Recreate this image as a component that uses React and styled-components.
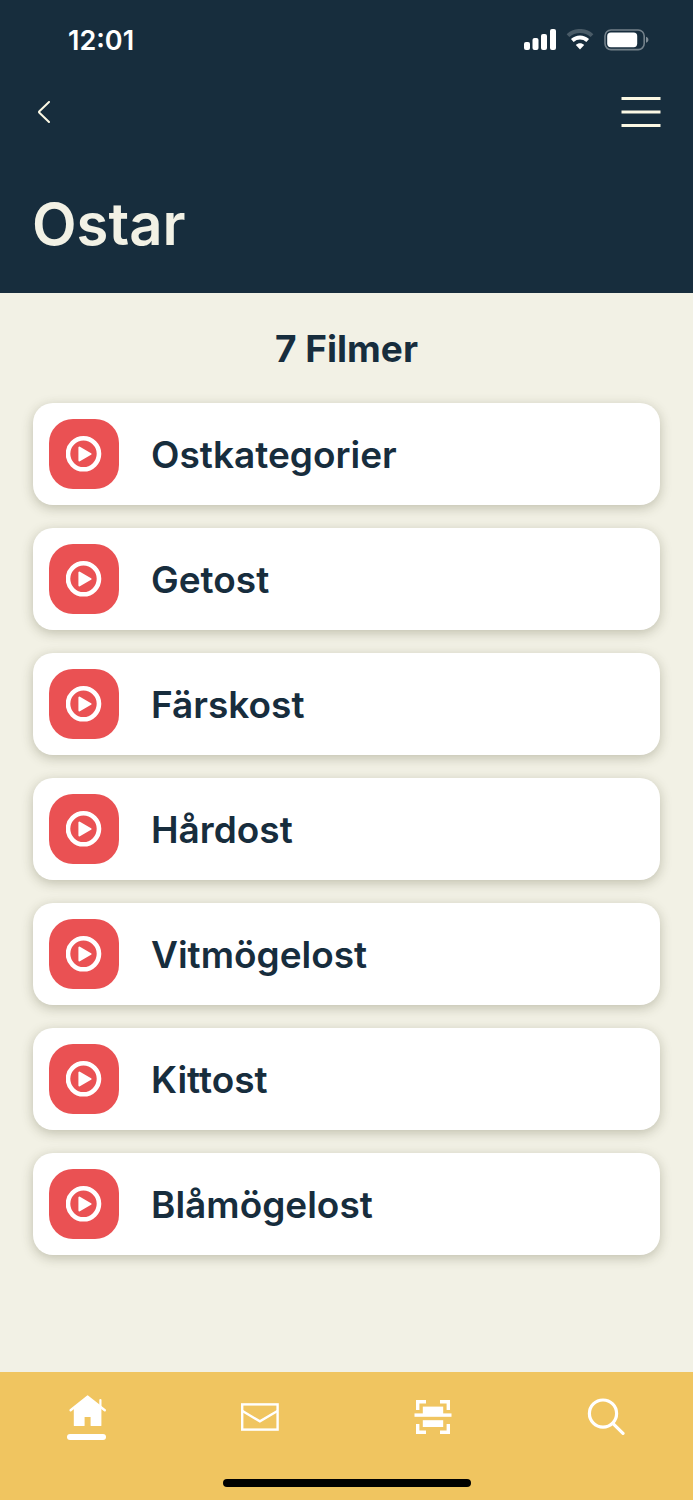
import styled, { createGlobalStyle } from 'styled-components';

const films = [
  'Ostkategorier',
  'Getost',
  'Färskost',
  'Hårdost',
  'Vitmögelost',
  'Kittost',
  'Blåmögelost',
];

function StatusBar() {
  return (
    <StatusBarDiv>
      <time>12:01</time>
      <StatusIconsDiv>
        <svg width="32" height="22" viewBox="0 0 32 22" fill="#fff">
          <rect x="0" y="13" width="6" height="8" rx="2" />
          <rect x="8.5" y="9" width="6" height="12" rx="2" />
          <rect x="17" y="5" width="6" height="16" rx="2" />
          <rect x="26" y="0" width="6" height="21" rx="2" />
        </svg>
        <svg width="28" height="22" viewBox="0 0 28 22" fill="none">
          <path
            d="M2 6.6C8.6 .4 19.4 .4 26 6.6"
            stroke="#fff"
            strokeOpacity="0.22"
            strokeWidth="4"
          />
          <path d="M6.3 11.6C10.8 7.6 17.2 7.6 21.7 11.6" stroke="#fff" strokeWidth="4" />
          <path d="M9.8 16C12.2 13.7 15.8 13.7 18.2 16L14 20.6Z" fill="#fff" />
        </svg>
        <svg width="46" height="22" viewBox="0 0 46 22" fill="none">
          <rect x="1" y="1" width="39.2" height="19.6" rx="6" stroke="#fff" strokeOpacity="0.4" strokeWidth="1.6" />
          <rect x="3.2" y="3.4" width="30" height="14.8" rx="3.6" fill="#fff" />
          <path d="M42 7.8C45.2 9 45.2 12.6 42 13.8Z" fill="#fff" fillOpacity="0.45" />
        </svg>
      </StatusIconsDiv>
    </StatusBarDiv>
  );
}

function FilmItem({ name }) {
  return (
    <li>
      <FilmButton type="button">
        <PlayDiv>
          <svg width="36" height="36" viewBox="0 0 36 36" fill="none" aria-hidden="true">
            <circle cx="17.5" cy="17.8" r="15.5" stroke="#fff" strokeWidth="4.6" />
            <path
              d="M13.4 11.6V24.4L24.6 18Z"
              fill="#fff"
              stroke="#fff"
              strokeWidth="2"
              strokeLinejoin="round"
            />
          </svg>
        </PlayDiv>
        <span>{name}</span>
      </FilmButton>
    </li>
  );
}

function App() {
  return (
    <>
      <GlobalStyle />
      <PageDiv>
        <Header>
          <StatusBar />
          <TopNavDiv>
            <IconButton type="button" aria-label="Tillbaka">
              <svg width="22" height="22" viewBox="0 0 22 22" fill="none">
                <path
                  d="M17 1L7.4 10.2Q6.6 11 7.4 11.8L17 21"
                  stroke="#fbf8e4"
                  strokeWidth="2"
                  strokeLinecap="round"
                />
              </svg>
            </IconButton>
            <IconButton type="button" aria-label="Meny">
              <svg width="40" height="32" viewBox="0 0 40 32" fill="#fbf8e4">
                <rect x="0.5" y="1" width="39" height="3" />
                <rect x="0.5" y="14.5" width="39" height="3" />
                <rect x="0.5" y="28" width="39" height="3" />
              </svg>
            </IconButton>
          </TopNavDiv>
          <h1>Ostar</h1>
        </Header>

        <Main>
          <h2>{films.length} Filmer</h2>
          <FilmList>
            {films.map((name) => (
              <FilmItem key={name} name={name} />
            ))}
          </FilmList>
        </Main>

        <Footer>
          <TabNav>
            <TabLink href="#hem" aria-label="Hem" aria-current="page">
              <svg width="40" height="32" viewBox="-2 0 40 32" fill="#fff">
                <path d="M1.6 15.2L18.6 1.6L35.8 15.2" fill="none" stroke="#fff" strokeWidth="2.4" strokeLinecap="round" strokeLinejoin="round" />
                <path d="M18.6 1.4L32.4 13V30.4Q32.4 31 31.6 31H22.2Q21.6 31 21.6 30.4V22H15.6V30.4Q15.6 31 15 31H5.6Q4.8 31 4.8 30.4V13Z" />
                <path d="M31.4 5V12" stroke="#fff" strokeWidth="2.2" strokeLinecap="round" />
              </svg>
              <ActiveBarSpan />
            </TabLink>
            <TabLink href="#post" aria-label="Meddelanden">
              <svg width="38" height="28" viewBox="0 0 38 28" fill="none" stroke="#fff" strokeWidth="2.4">
                <rect x="1.2" y="1.4" width="35.4" height="25.2" />
                <path d="M1.5 8L18.9 18.4L36.4 8" />
              </svg>
            </TabLink>
            <TabLink href="#skanna" aria-label="Skanna">
              <svg width="38" height="34" viewBox="0 0 38 34" fill="#fff">
                <path d="M2 0H12V3.4H5.4V10H2Z" />
                <path d="M26 0H36V10H32.6V3.4H26Z" />
                <path d="M2 24H5.4V30.6H12V34H2Z" />
                <path d="M32.6 24H36V34H26V30.6H32.6Z" />
                <rect x="8.8" y="6.6" width="20.4" height="8" />
                <rect x="0.5" y="13.4" width="37" height="3.4" />
                <rect x="8.8" y="20.2" width="20.4" height="6.8" />
              </svg>
            </TabLink>
            <TabLink href="#sok" aria-label="Sök">
              <svg width="38" height="38" viewBox="0 0 38 38" fill="none" stroke="#fff" strokeWidth="3.2">
                <circle cx="16" cy="15.6" r="13.6" />
                <path d="M25.8 25.4L36 35.4" strokeLinecap="round" />
              </svg>
            </TabLink>
          </TabNav>
          <HomeIndicatorDiv />
        </Footer>
      </PageDiv>
    </>
  );
}

export default App;

const GlobalStyle = createGlobalStyle`
  :root {
    --navy: #172d3d;
    --cream: #f2f1e5;
    --red: #ea5153;
    --yellow: #f0c560;
    --white: #fff;
  }

  * {
    box-sizing: border-box;
  }

  body {
    margin: 0;
    color: var(--navy);
    background-color: var(--cream);
    font-family: Inter, 'Liberation Sans', sans-serif;
  }

  h1, h2, ul {
    margin: 0;
    padding: 0;
  }

  svg {
    display: block;
  }
`;

const PageDiv = styled.div`
  display: flex;
  flex-direction: column;
  min-height: 100vh;
`;

const Header = styled.header`
  padding: 0 32px 33px;
  color: var(--cream);
  background-color: var(--navy);

  > h1 {
    margin-top: 44px;
    font-size: 58px;
    font-weight: 600;
    line-height: 72px;
  }
`;

const StatusBarDiv = styled.div`
  display: flex;
  align-items: center;
  justify-content: space-between;
  height: 80px;
  padding: 0 11px 0 36px;

  > time {
    color: var(--white);
    font-size: 27px;
    font-weight: 600;
  }
`;

const StatusIconsDiv = styled.div`
  display: flex;
  gap: 10px;
`;

const TopNavDiv = styled.div`
  display: flex;
  align-items: center;
  justify-content: space-between;
  height: 64px;
`;

const IconButton = styled.button`
  padding: 0;
  border: none;
  background: none;
  cursor: pointer;
`;

const Main = styled.main`
  flex-grow: 1;
  padding: 32px 33px;

  > h2 {
    font-size: 37px;
    font-weight: 700;
    line-height: 48px;
    text-align: center;
  }
`;

const FilmList = styled.ul`
  display: flex;
  flex-direction: column;
  gap: 23px;
  margin-top: 30px;
  list-style: none;
`;

const FilmButton = styled.button`
  display: flex;
  align-items: center;
  gap: 32px;
  width: 100%;
  height: 102px;
  padding: 0 16px;
  border: none;
  border-radius: 20px;
  color: inherit;
  background-color: var(--white);
  box-shadow: 0 3px 12px rgba(60, 60, 30, 0.28);
  font-family: inherit;
  font-size: 37px;
  font-weight: 600;
  cursor: pointer;
`;

const PlayDiv = styled.div`
  display: flex;
  align-items: center;
  justify-content: center;
  width: 70px;
  height: 70px;
  border-radius: 24px;
  background-color: var(--red);
`;

const Footer = styled.footer`
  padding-bottom: 13px;
  background-color: var(--yellow);
`;

const TabNav = styled.nav`
  display: flex;
  height: 90px;
`;

const TabLink = styled.a`
  display: flex;
  flex: 1;
  flex-direction: column;
  align-items: center;
  justify-content: center;
  gap: 7px;
`;

const ActiveBarSpan = styled.span`
  width: 39px;
  height: 6px;
  border-radius: 3px;
  background-color: var(--white);
`;

const HomeIndicatorDiv = styled.div`
  width: 248px;
  height: 8px;
  margin: 17px auto 0;
  border-radius: 4px;
  background-color: #000;
`;
